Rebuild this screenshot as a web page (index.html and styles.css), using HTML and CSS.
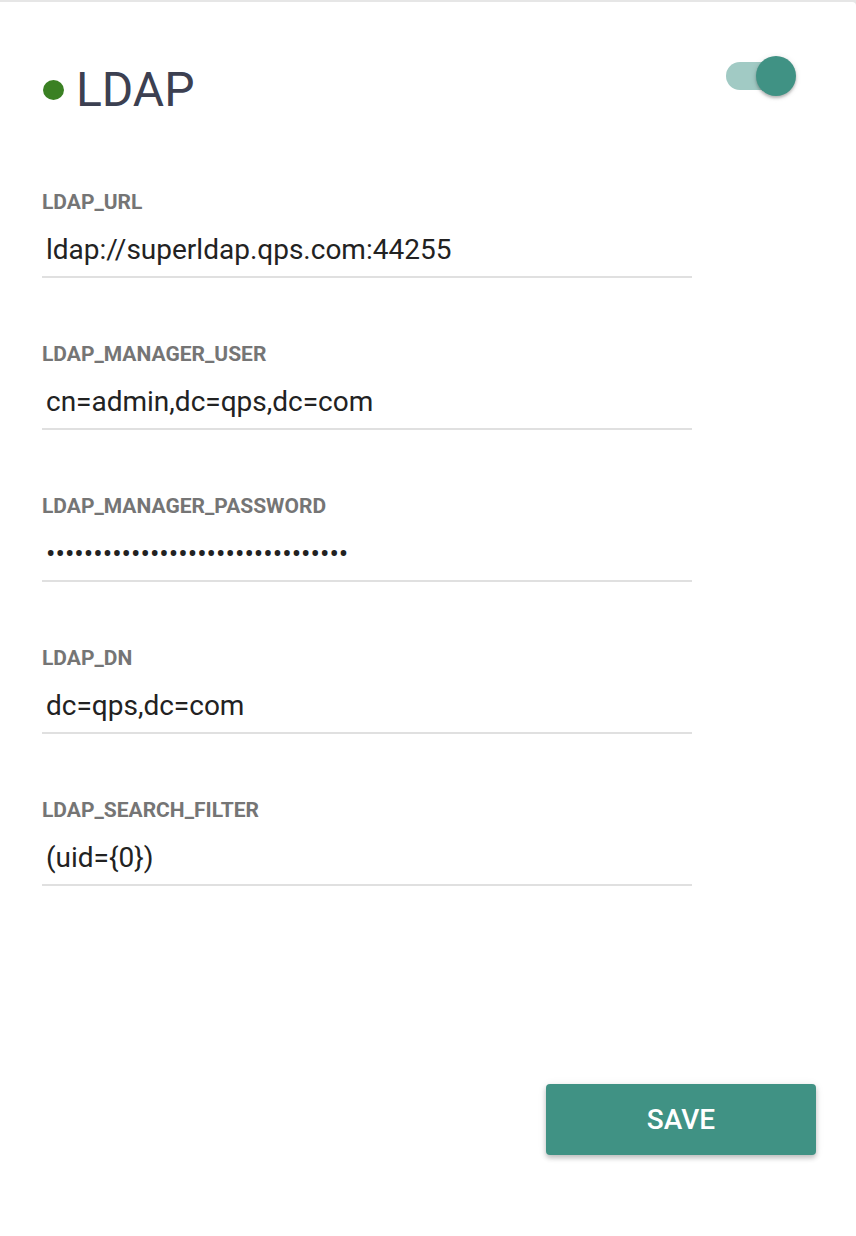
FILE: index.html
```html
<!DOCTYPE html>
<html lang="en">
<head>
<meta charset="utf-8">
<title>LDAP</title>
<link rel="stylesheet" href="styles.css">
</head>
<body>
<div class="card">
  <div class="header">
    <div class="title-wrap">
      <span class="status-dot"></span>
      <h1 class="title">LDAP</h1>
    </div>
    <div class="switch">
      <span class="switch-track"></span>
      <span class="switch-thumb"></span>
    </div>
  </div>

  <div class="fields">
    <div class="field">
      <div class="field-label">LDAP_URL</div>
      <div class="field-value">ldap://superldap.qps.com:44255</div>
    </div>
    <div class="field">
      <div class="field-label">LDAP_MANAGER_USER</div>
      <div class="field-value">cn=admin,dc=qps,dc=com</div>
    </div>
    <div class="field">
      <div class="field-label">LDAP_MANAGER_PASSWORD</div>
      <div class="field-value password">••••••••••••••••••••••••••••••••</div>
    </div>
    <div class="field">
      <div class="field-label">LDAP_DN</div>
      <div class="field-value">dc=qps,dc=com</div>
    </div>
    <div class="field">
      <div class="field-label">LDAP_SEARCH_FILTER</div>
      <div class="field-value">(uid={0})</div>
    </div>
  </div>

  <div class="actions">
    <button class="save-btn" type="button">SAVE</button>
  </div>
</div>
</body>
</html>
```

FILE: styles.css
```css
* {
  box-sizing: border-box;
}

html, body {
  margin: 0;
  padding: 0;
}

body {
  background: #e6e6e6;
  font-family: Roboto, "Liberation Sans", Arial, sans-serif;
}

.card {
  margin-top: 2px;
  min-height: 1234px;
  background: #ffffff;
  border-top-right-radius: 4px;
  padding: 54px 40px 0 42px;
}

.header {
  display: flex;
  justify-content: space-between;
  align-items: flex-start;
  margin-right: 20px;
}

.title-wrap {
  display: flex;
  align-items: center;
  margin-top: 6px;
}

.status-dot {
  width: 21px;
  height: 20px;
  border-radius: 50%;
  background: #3a8023;
  margin-left: 1px;
  margin-right: 12px;
  flex: none;
}

.title {
  margin: 0;
  font-size: 48px;
  line-height: 56px;
  font-weight: 400;
  color: #3c4051;
}

.switch {
  position: relative;
  width: 70px;
  height: 40px;
}

.switch-track {
  position: absolute;
  left: 0;
  top: 6px;
  width: 64px;
  height: 28px;
  border-radius: 14px;
  background: #a1cac4;
}

.switch-thumb {
  position: absolute;
  left: 30px;
  top: 0;
  width: 40px;
  height: 40px;
  border-radius: 50%;
  background: #409284;
  box-shadow: 0 2px 3px rgba(0, 0, 0, 0.25), 0 1px 6px rgba(0, 0, 0, 0.1);
}

.fields {
  margin-top: 72px;
  width: 650px;
}

.field {
  margin-bottom: 64px;
}

.field:last-child {
  margin-bottom: 0;
}

.field-label {
  font-size: 21px;
  line-height: 24px;
  font-weight: 700;
  color: #757575;
  margin-bottom: 16px;
}

.field-value {
  font-size: 28px;
  line-height: 40px;
  color: #222222;
  padding: 0 0 6px 4px;
  border-bottom: 2px solid #e0e0e0;
}

.actions {
  display: flex;
  justify-content: flex-end;
  margin-top: 198px;
}

.save-btn {
  width: 270px;
  height: 71px;
  border: none;
  border-radius: 4px;
  background: #409284;
  color: #ffffff;
  font-family: Roboto, "Liberation Sans", Arial, sans-serif;
  font-size: 28px;
  font-weight: 500;
  box-shadow: 0 3px 5px rgba(0, 0, 0, 0.22), 0 1px 10px rgba(0, 0, 0, 0.08);
  cursor: pointer;
}
```
